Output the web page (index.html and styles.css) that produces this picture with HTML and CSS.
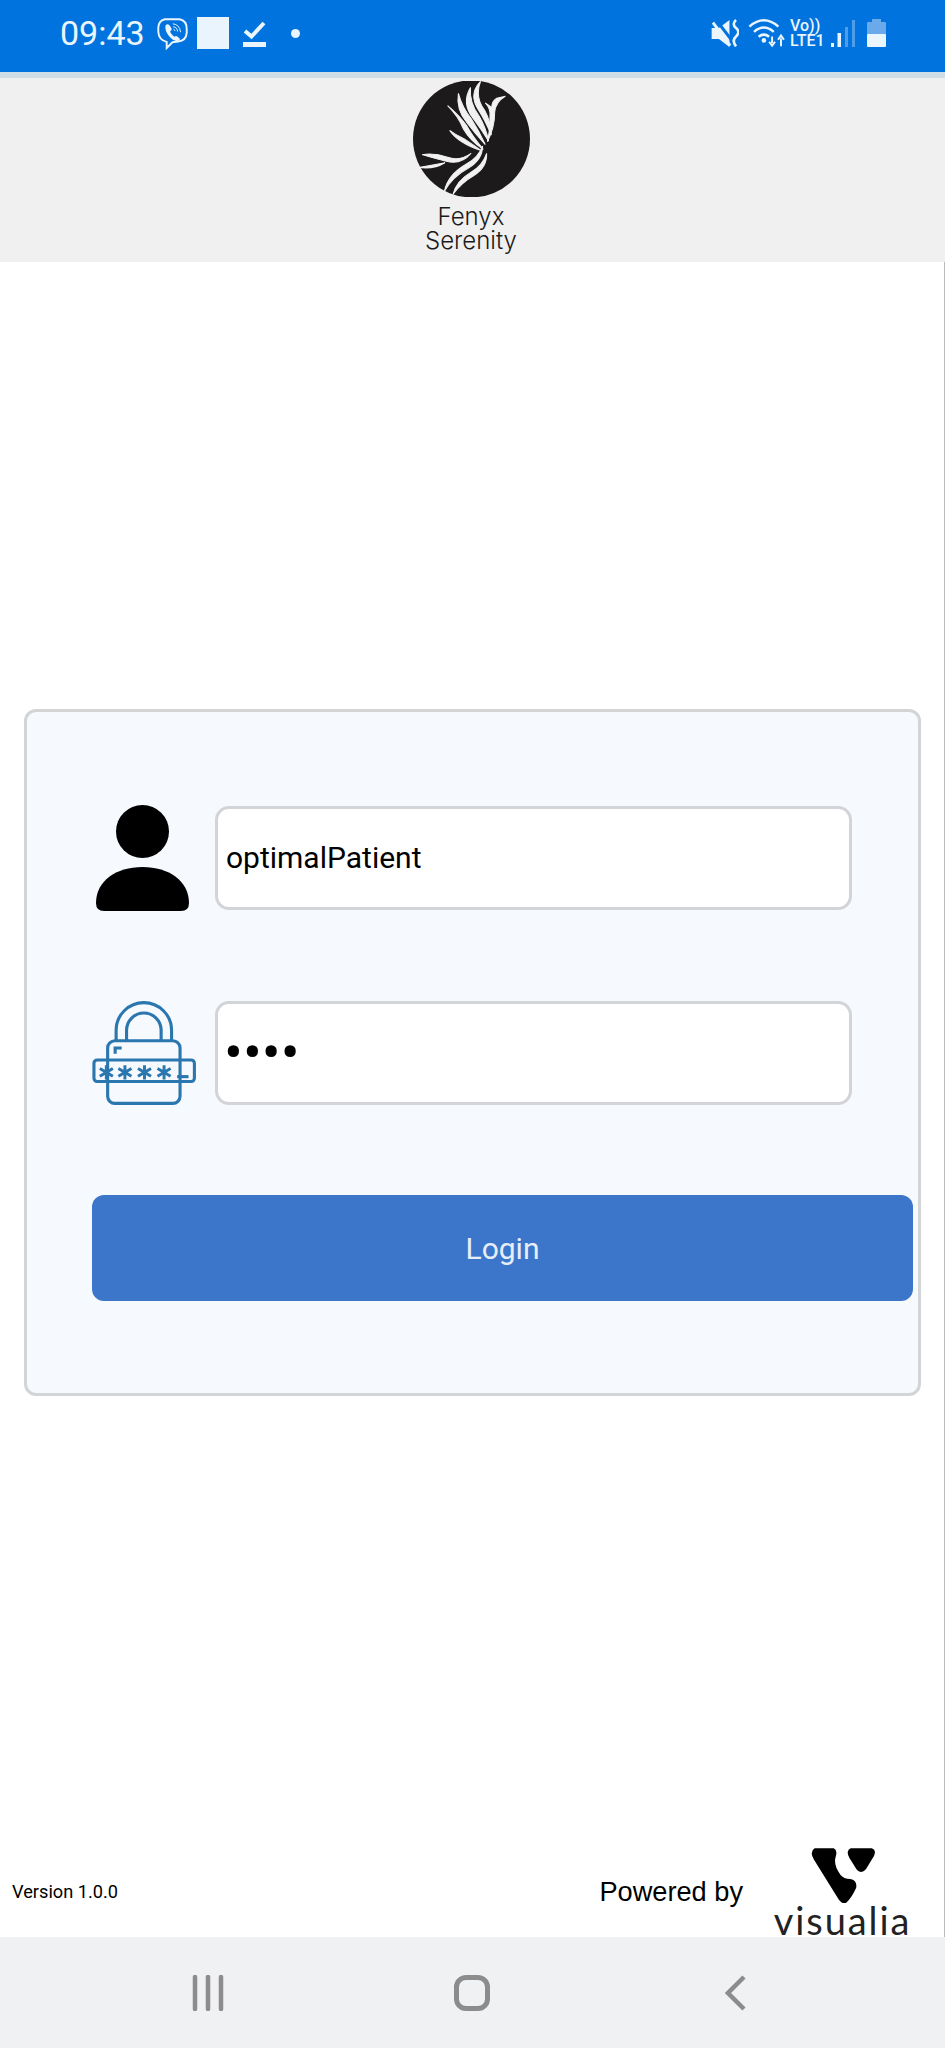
FILE: index.html
```html
<!DOCTYPE html>
<html lang="en">
<head>
    <meta charset="UTF-8">
    <meta name="viewport" content="width=device-width, initial-scale=1.0">
    <title>Fenyx Serenity - Login</title>
    <link rel="stylesheet" href="styles.css">
</head>
<body>
    <!-- Phone status bar -->
    <div class="status-bar">
        <span class="time">09:43</span>
        <svg class="icon-viber" viewBox="468 58 96 100">
            <path d="M492 64 H538 Q560 68 560 94 V106 Q558 130 534 133 L516 135 L498 153 V134 Q473 128 472 102 V90 Q473 69 492 64 Z" fill="none" stroke="#eaf5fd" stroke-width="6"/>
            <path d="M494 84 Q500 76 506 82 L513 92 Q515 98 509 101 Q509 108 522 118 Q527 114 532 118 L539 124 Q540 130 532 132 Q518 132 505 116 Q492 100 494 84 Z" fill="#eaf5fd"/>
            <path d="M517 78 Q538 80 541 104 M518 87 Q530 88 532 102 M519 95 Q523 96 524 100" fill="none" stroke="#eaf5fd" stroke-width="3"/>
        </svg>
        <div class="status-square"></div>
        <svg class="icon-check" viewBox="0 0 23 27">
            <path d="M2 11 L8.500 16.500 L21 3" fill="none" stroke="#eaf5fd" stroke-width="4"/>
            <rect x="0" y="22" width="23" height="5" fill="#eaf5fd"/>
        </svg>
        <div class="status-dot"></div>

        <div class="status-right">
            <svg class="icon-mute" viewBox="180 65 85 85">
                <path d="M182 92 H204 L236 68 V150 L204 126 H182 Z" fill="#eaf5fd"/>
                <path d="M196 68 L246 134" stroke="#0073de" stroke-width="9"/>
                <path d="M186 76 L238 146" stroke="#eaf5fd" stroke-width="9"/>
                <path d="M256 68 q-14 12 0 24 q14 12 0 26 q-14 12 0 30" fill="none" stroke="#eaf5fd" stroke-width="8"/>
            </svg>
            <svg class="icon-wifi" viewBox="295 65 112 85">
                <path d="M299 88 Q343 50 387 88 M313 104 Q343 78 373 104 M327 119 Q343 106 359 119" fill="none" stroke="#eaf5fd" stroke-width="7.500"/>
                <circle cx="343" cy="130" r="7" fill="#eaf5fd"/>
                <path d="M368 118 V138 M359 134 L368 146 L377 134 M395 148 V124 M386 128 L395 115 L404 128" fill="none" stroke="#eaf5fd" stroke-width="6"/>
            </svg>
            <div class="volte">
                <span>Vo))</span>
                <span>LTE1</span>
            </div>
            <svg class="icon-signal" viewBox="0 0 24 27">
                <rect x="0" y="23" width="3" height="4" fill="#eaf5fd"/>
                <rect x="6.500" y="13" width="3.500" height="14" fill="#eaf5fd"/>
                <rect x="14" y="7" width="3" height="20" fill="#4f9ce8"/>
                <rect x="21" y="0" width="3" height="27" fill="#4f9ce8"/>
            </svg>
            <svg class="icon-battery" viewBox="0 0 19 28">
                <rect x="5" y="0" width="9" height="4" fill="#6aaaea"/>
                <rect x="0" y="3" width="19" height="13" rx="1" fill="#6aaaea"/>
                <rect x="0" y="15" width="19" height="13" rx="1" fill="#eaf5fd"/>
            </svg>
        </div>
    </div>

    <!-- App header with logo -->
    <div class="app-header">
        <svg class="logo-mark" viewBox="97 65 348 345">
            <circle cx="271" cy="237" r="174" fill="#1c1a1b"/>
            <g fill="#f2f2f2" stroke="#f2f2f2" stroke-width="3">
                <path d="M200 138 Q232 170 246 206 Q268 244 306 268 Q272 226 258 200 Q236 168 200 138 Z"/>
                <path d="M232 102 Q224 150 258 190 Q282 222 312 254 Q294 214 272 180 Q244 146 232 102 Z"/>
                <path d="M268 84 Q240 130 276 176 Q300 208 322 244 Q314 204 294 170 Q264 130 268 84 Z"/>
                <path d="M298 66 Q262 104 290 148 Q312 182 330 226 Q328 184 310 152 Q280 112 298 66 Z"/>
                <path d="M206 212 Q232 250 300 272 Q256 240 240 232 Q222 224 206 212 Z"/>
                <path d="M372 110 L346 116 Q330 126 332 144 L312 130 Q328 146 326 170 Q326 216 318 246 Q340 204 340 158 Q342 128 372 110 Z"/>
                <path d="M124 284 Q160 278 200 292 Q236 304 270 280 Q240 316 196 304 Q156 294 124 284 Z"/>
                <path d="M114 322 Q150 316 192 308 Q160 328 114 322 Z"/>
                <path d="M190 394 Q200 344 256 312 Q292 292 304 258 Q304 298 262 324 Q214 350 190 394 Z"/>
                <path d="M216 402 Q226 362 270 336 Q304 316 316 280 Q318 322 278 346 Q240 368 216 402 Z"/>
            </g>
        </svg>
        <div class="logo-text">Fenyx<br>Serenity</div>
    </div>

    <div class="main">
        <div class="login-card">
            <div class="input-group">
                <svg class="icon-user" viewBox="0 0 93 106">
                    <circle cx="46.500" cy="26.500" r="26.500" fill="#000"/>
                    <path d="M0 98 C0 76 20 62 46.500 62 C73 62 93 76 93 98 Q93 106 85 106 H8 Q0 106 0 98 Z" fill="#000"/>
                </svg>
                <input class="text-input" type="text" value="optimalPatient">
            </div>
            <div class="input-group">
                <svg class="icon-lock" viewBox="35 40 320 325">
                    <g fill="none" stroke="#2a76ae" stroke-width="9.500">
                        <rect x="82" y="165" width="222" height="192" rx="22"/>
                        <rect x="40" y="224" width="308" height="66" rx="10"/>
                        <path d="M108 165 V133 A85 85 0 0 1 278 133 V165"/>
                        <path d="M140 165 V133 A53 53 0 0 1 246 133 V165"/>
                        <path d="M105 205 V187 H125"/>
                        <path d="M295 275 H330"/>
                    </g>
                    <g fill="none" stroke="#2a76ae" stroke-width="9">
                        <path d="M78 240 V284 M58 250 L98 274 M58 274 L98 250"/>
                        <path d="M135 240 V284 M115 250 L155 274 M115 274 L155 250"/>
                        <path d="M195 240 V284 M175 250 L215 274 M175 274 L215 250"/>
                        <path d="M255 240 V284 M235 250 L275 274 M235 274 L275 250"/>
                    </g>
                </svg>
                <input class="text-input password-input" type="password" value="abcd">
            </div>
            <button class="login-btn">Login</button>
        </div>

        <div class="footer">
            <span class="version">Version 1.0.0</span>
            <span class="powered">Powered by</span>
            <div class="visualia">
                <svg class="visualia-mark" viewBox="748 84 200 170">
                    <path d="M762 85 H820 Q832 90 826 110 Q818 135 840 165 Q850 178 870 178 Q892 182 888 205 Q875 235 858 250 Q845 255 835 240 L760 120 Q745 95 762 85 Z" fill="#000"/>
                    <path d="M872 85 H935 Q950 90 942 108 L918 148 Q905 165 890 150 L868 115 Q855 92 872 85 Z" fill="#000"/>
                </svg>
                <span class="visualia-text">visualia</span>
            </div>
        </div>
    </div>

    <!-- Android nav buttons -->
    <div class="nav-bar">
        <svg class="icon-recents" viewBox="0 0 32 36">
            <path d="M3 2 V34 M16 2 V34 M29 2 V34" fill="none" stroke="#8c8c8c" stroke-width="4.500" stroke-linecap="round"/>
        </svg>
        <div class="icon-home"></div>
        <svg class="icon-back" viewBox="0 0 22 36">
            <path d="M19 2 L3 18 L19 34" fill="none" stroke="#8c8c8c" stroke-width="4.500"/>
        </svg>
    </div>
</body>
</html>
```

FILE: styles.css
```css
* {
    box-sizing: border-box;
}
body {
    margin: 0;
    width: 945px;
    height: 2048px;
    display: flex;
    flex-direction: column;
    font-family: Roboto, Arial, sans-serif;
    background: white;
    overflow: hidden;
}

/* status bar */
.status-bar {
    flex: none;
    height: 78px;
    padding: 0 59px 6px 60px;
    display: flex;
    align-items: center;
    background: #0073de;
    border-bottom: 6px solid #cfdde6;
    color: #eaf5fd;
}
.time {
    font-size: 34px;
    width: 83px;
}
.icon-viber {
    width: 31px;
    height: 33px;
    margin-left: 14px;
}
.status-square {
    width: 32px;
    height: 32px;
    margin-left: 9px;
    background: #eaf4fc;
}
.icon-check {
    width: 23px;
    height: 27px;
    margin-left: 14px;
}
.status-dot {
    width: 9px;
    height: 9px;
    margin-left: 25px;
    border-radius: 50%;
    background: #eaf5fd;
}
.status-right {
    margin-left: auto;
    display: flex;
    align-items: center;
}
.icon-mute {
    width: 28px;
    height: 28px;
}
.icon-wifi {
    width: 37px;
    height: 28px;
    margin-left: 9px;
}
.volte {
    display: flex;
    flex-direction: column;
    margin-left: 5px;
    font-size: 16px;
    font-weight: 500;
    line-height: 15px;
    width: 36px;
}
.icon-signal {
    width: 24px;
    height: 27px;
    margin-left: 5px;
}
.icon-battery {
    width: 19px;
    height: 28px;
    margin-left: 12px;
}

/* header */
.app-header {
    flex: none;
    height: 184px;
    padding: 3px 3px 0 0;
    display: flex;
    flex-direction: column;
    align-items: center;
    background: #f0f0f0;
}
.logo-mark {
    width: 117px;
    height: 116px;
    flex: none;
}
.logo-text {
    margin-top: 8px;
    font-family: Inter, sans-serif;
    font-weight: 300;
    font-size: 24px;
    line-height: 24px;
    text-align: center;
    color: #1c1a1b;
}

/* login card */
.main {
    flex: 1;
    display: flex;
    flex-direction: column;
    border-right: 1px solid #bbb;
}
.login-card {
    width: 897px;
    margin: 447px 0 0 24px;
    padding: 94px 0 92px 65px;
    background: #f6f9fe;
    border: 3px solid #d2d4d6;
    border-radius: 12px;
}
.input-group {
    display: flex;
    align-items: center;
    gap: 18px;
    height: 104px;
    margin-bottom: 91px;
}
.input-group + .input-group {
    margin-bottom: 90px;
}
.input-group svg {
    flex: none;
}
.icon-user {
    width: 93px;
    height: 106px;
    margin: 0 8px 0 4px;
}
.icon-lock {
    width: 105px;
    height: 106px;
}
.text-input {
    width: 637px;
    height: 104px;
    padding: 0 8px 2px;
    border: 3px solid #d2d4d8;
    border-radius: 14px;
    background: white;
    font-family: Roboto, Arial, sans-serif;
    font-size: 30px;
    color: #000;
    outline: none;
}
.password-input {
    font-size: 56px;
    padding: 0 6px;
}
.login-btn {
    display: block;
    width: 821px;
    height: 106px;
    border: none;
    border-radius: 12px;
    background: #3b76cb;
    color: #e8eef8;
    font-family: Roboto, Arial, sans-serif;
    font-size: 30px;
}

/* footer */
.footer {
    margin-top: auto;
    height: 89px;
    display: flex;
    align-items: center;
    padding: 0 34px 2px 12px;
}
.version {
    font-size: 18.200px;
    color: #000;
}
.powered {
    margin-left: auto;
    font-family: "Liberation Sans", Arial, sans-serif;
    font-size: 27.200px;
    color: #000;
}
.visualia {
    width: 135px;
    height: 89px;
    margin: 2px 0 0 32px;
    display: flex;
    flex-direction: column;
    align-items: center;
}
.visualia-mark {
    width: 66px;
    height: 56px;
    flex: none;
}
.visualia-text {
    font-family: Lato, sans-serif;
    font-size: 38px;
    line-height: 32px;
    letter-spacing: 1.900px;
    color: #222;
}

/* nav bar */
.nav-bar {
    flex: none;
    height: 111px;
    padding: 0 0 0 76px;
    display: grid;
    grid-template-columns: repeat(3, 264px);
    justify-items: center;
    align-items: center;
    background: #f0f1f3;
}
.icon-recents {
    width: 32px;
    height: 36px;
}
.icon-home {
    width: 36px;
    height: 36px;
    border: 5px solid #8c8c8c;
    border-radius: 12px;
}
.icon-back {
    width: 22px;
    height: 36px;
}
```
